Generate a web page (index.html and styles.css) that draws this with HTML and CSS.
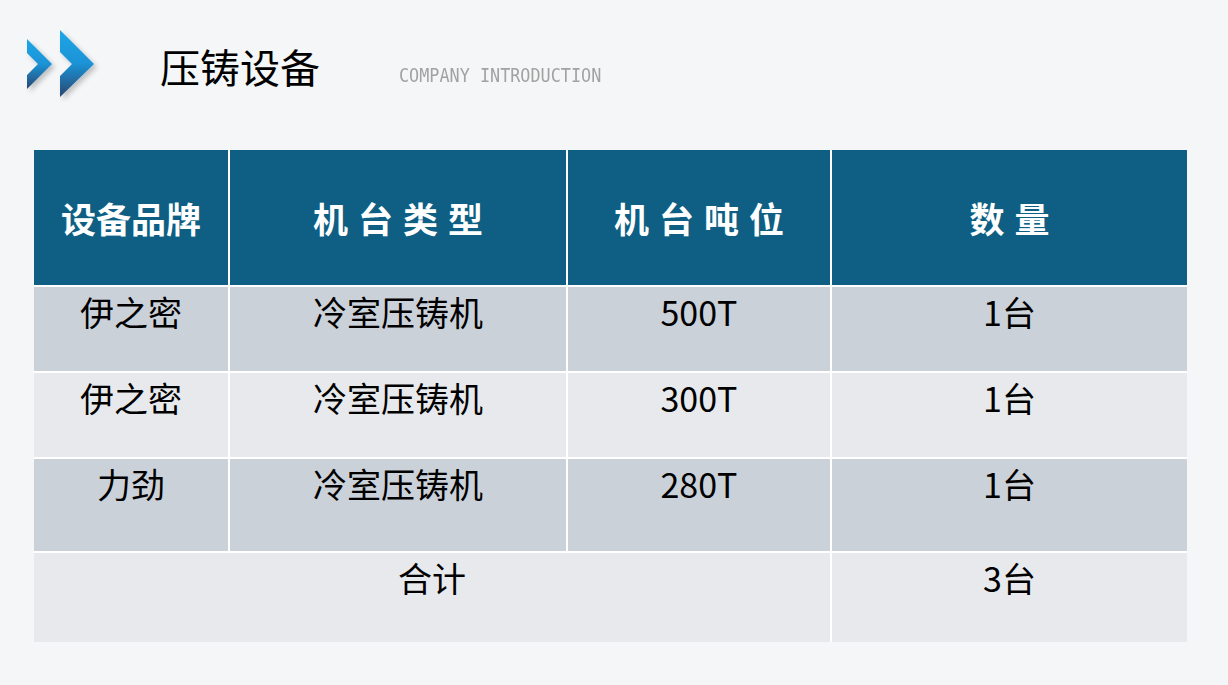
FILE: index.html
```html
<!DOCTYPE html>
<html lang="zh">
<head>
<meta charset="utf-8">
<title>压铸设备</title>
<link rel="stylesheet" href="styles.css">
</head>
<body>
<div class="page">
  <header class="top">
    <svg class="logo" viewBox="24 26 80 76" width="80" height="76" aria-hidden="true">
      <defs>
        <linearGradient id="g" x1="0" y1="0" x2="0" y2="1">
          <stop offset="0" stop-color="#1ea6e6"/>
          <stop offset="0.5" stop-color="#1a93d6"/>
          <stop offset="1" stop-color="#2a4670"/>
        </linearGradient>
        <filter id="sh" x="-30%" y="-30%" width="160%" height="160%">
          <feDropShadow dx="3" dy="3" stdDeviation="2.5" flood-color="#000" flood-opacity="0.22"/>
        </filter>
      </defs>
      <g filter="url(#sh)" fill="url(#g)">
        <polygon points="27,39 52,64 27,89 27,75 38,64 27,53"/>
        <polygon points="60,30 94,64 60,97 60,76 72,64 60,52"/>
      </g>
    </svg>
    <h1 class="title">压铸设备</h1>
    <div class="sub"><span class="sub-text">COMPANY INTRODUCTION</span></div>
  </header>

  <div class="table">
    <div class="th">设备品牌</div>
    <div class="th spaced">机台类型</div>
    <div class="th spaced">机台吨位</div>
    <div class="th spaced">数量</div>

    <div class="td odd">伊之密</div>
    <div class="td odd">冷室压铸机</div>
    <div class="td odd">500T</div>
    <div class="td odd">1台</div>

    <div class="td even">伊之密</div>
    <div class="td even">冷室压铸机</div>
    <div class="td even">300T</div>
    <div class="td even">1台</div>

    <div class="td odd">力劲</div>
    <div class="td odd">冷室压铸机</div>
    <div class="td odd">280T</div>
    <div class="td odd">1台</div>

    <div class="td even span3">合计</div>
    <div class="td even">3台</div>
  </div>
</div>
</body>
</html>
```

FILE: styles.css
```css
html, body {
  margin: 0;
  padding: 0;
}
body {
  background: #f5f6f7;
  font-family: "Noto Sans CJK SC", "Noto Sans", sans-serif;
  color: #000;
  width: 1228px;
  height: 685px;
  overflow: hidden;
}
.page {
  width: 1228px;
  height: 685px;
}
.top {
  display: flex;
  align-items: flex-start;
  height: 150px;
}
.logo {
  display: block;
  margin-left: 24px;
  margin-top: 26px;
  flex: none;
}
.title {
  margin: 42px 0 0 56px;
  font-size: 40px;
  line-height: 48px;
  font-weight: 400;
  white-space: nowrap;
}
.sub {
  margin: 63px 0 0 79px;
  width: 210px;
  height: 24px;
}
.sub-text {
  display: inline-block;
  font-family: "DejaVu Sans Mono", "Liberation Mono", monospace;
  font-size: 20px;
  line-height: 24px;
  color: #a2a2a2;
  white-space: nowrap;
  transform: scaleX(0.84);
  transform-origin: left center;
}
.table {
  margin-left: 34px;
  width: 1153px;
  display: grid;
  grid-template-columns: 194px 336px 262px 355px;
  grid-template-rows: 135px 84px 84px 92px 89px;
  column-gap: 2px;
  row-gap: 2px;
  background: #ffffff;
}
.th {
  background: #0e5f83;
  color: #ffffff;
  font-weight: 700;
  font-size: 35px;
  display: flex;
  align-items: center;
  justify-content: center;
  white-space: nowrap;
}
.th.spaced {
  letter-spacing: 10px;
  text-indent: 10px;
}
.td {
  text-align: center;
  font-size: 34px;
  line-height: 50px;
  white-space: nowrap;
}
.odd {
  background: #cbd1d9;
}
.even {
  background: #e7e9ec;
}
.span3 {
  grid-column: span 3;
}
```
